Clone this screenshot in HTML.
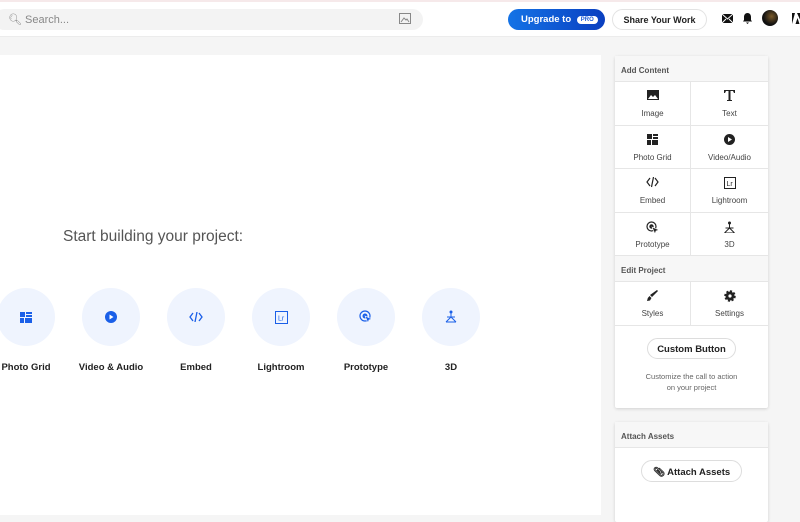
<!DOCTYPE html>
<html><head><style>
*{box-sizing:border-box;margin:0;padding:0}
body{width:800px;height:500px;overflow:hidden;background:#f5f5f5;font-family:"Liberation Sans",sans-serif;position:relative}
.abs{position:absolute}
.top{left:0;top:0;width:800px;height:37px;background:#fff;border-top:2px solid #f6e9ea;border-bottom:1px solid #ececec}
.search{left:-6px;top:9px;width:429px;height:21px;background:#f3f3f3;border-radius:11px;font-size:11px;color:#888;padding:4px 0 0 14px}
.up{left:508px;top:9px;width:97px;height:21px;border-radius:11px;background:linear-gradient(90deg,#1473e6,#0a3fc0);color:#fff;font-size:9.5px;font-weight:bold;padding:5px 0 0 13px}
.pro{display:inline-block;background:#fff;color:#1a5ad8;font-size:6px;border-radius:5px;padding:1px 4px;margin-left:3px;vertical-align:1px}
.share{left:612px;top:9px;width:95px;height:21px;border-radius:11px;border:1px solid #e3e3e3;background:#fff;font-size:9px;font-weight:bold;color:#222;text-align:center;padding-top:5px}
.canvas{left:0;top:55px;width:601px;height:460px;background:#fff}
.title{left:63px;top:228px;font-size:15.5px;color:#555}
.circ{width:58px;height:58px;border-radius:50%;background:#eff4fe;top:288px;display:flex;align-items:center;justify-content:center}
.lab{top:362px;width:100px;text-align:center;font-size:9.5px;font-weight:bold;color:#222}
.panel{background:#fff;box-shadow:0 1px 3px rgba(0,0,0,.15);border-radius:2px}
.hd{height:26px;background:#f7f7f7;font-size:8px;font-weight:bold;color:#555;padding:10px 0 0 6px;border-bottom:1px solid #e6e6e6}
.grid{display:grid;grid-template-columns:76px 77px}
.cell{height:43.5px;border-right:1px solid #e6e6e6;border-bottom:1px solid #e6e6e6;text-align:center;font-size:8px;color:#444;padding-top:8px}
.cell:nth-child(2n){border-right:none}
.cell svg{display:block;margin:0 auto 7px;height:12px}
.pill{border:1px solid #ddd;border-radius:12px;background:#fff;font-size:9.5px;font-weight:bold;color:#222;text-align:center}
</style></head><body>
<div class="abs top"></div>
<div class="abs search">🔍&#xFE0E; Search...</div>
<svg class="abs" style="left:399px;top:13px" width="12" height="11" viewBox="0 0 12 11"><rect x=".5" y=".5" width="11" height="10" fill="none" stroke="#888"/><path d="M2 9l3-4 2 2 1-1 2 3" fill="none" stroke="#888"/></svg>
<div class="abs up">Upgrade to <span class="pro">PRO</span></div>
<div class="abs share">Share Your Work</div>
<svg class="abs" style="left:722px;top:14px" width="11" height="9"><rect width="11" height="9" fill="#111"/><path d="M0 0l5.5 5 5.5-5M0 9l4-4M11 9l-4-4" stroke="#fff" fill="none"/></svg>
<svg class="abs" style="left:743px;top:13px" width="9" height="11"><path d="M4.5 0c-2 0-3.5 1.5-3.5 4v3l-1 1.5h9l-1-1.5v-3c0-2.5-1.5-4-3.5-4zM3 9.5h3l-1.5 1.5z" fill="#111"/></svg>
<div class="abs" style="left:762px;top:10px;width:16px;height:16px;border-radius:50%;background:radial-gradient(circle at 60% 40%,#7a5a2a,#111 60%)"></div>
<svg class="abs" style="left:792px;top:13px" width="10" height="11"><path d="M0 11V0h3zM5 0h5v11zM5.5 5l2 6h-4z" fill="#111"/></svg>
<div class="abs canvas"></div>
<div class="abs title">Start building your project:</div>
<div class="abs circ" style="left:-3px"><svg width="12" height="11"><path d="M0 0h5v5H0zM6 0h6v2H6zM6 3h6v2H6zM0 6h4v5H0zM5 6h7v5H5z" fill="#1a5fe8"/></svg></div>
<div class="abs circ" style="left:82px"><svg width="12" height="12"><circle cx="6" cy="6" r="6" fill="#1a5fe8"/><path d="M4.5 3.5v5l4-2.5z" fill="#fff"/></svg></div>
<div class="abs circ" style="left:167px"><svg width="14" height="10"><path d="M4 1L1 5l3 4M10 1l3 4-3 4M8 0L6 10" stroke="#1a5fe8" stroke-width="1.3" fill="none"/></svg></div>
<div class="abs circ" style="left:252px"><svg width="13" height="13"><rect x=".5" y=".5" width="12" height="12" fill="none" stroke="#1a5fe8"/><text x="3" y="9.5" font-size="7" fill="#1a5fe8" font-family="Liberation Sans">Lr</text></svg></div>
<div class="abs circ" style="left:337px"><svg width="14" height="14"><circle cx="6" cy="6" r="5" fill="none" stroke="#1a5fe8" stroke-width="1.2"/><circle cx="6" cy="6" r="2.5" fill="#1a5fe8"/><path d="M6 6l7 3-3 1-1 3z" fill="#1a5fe8" stroke="#fff" stroke-width=".6"/></svg></div>
<div class="abs circ" style="left:422px"><svg width="14" height="14"><circle cx="7" cy="2" r="1.5" fill="#1a5fe8"/><path d="M7 3v4M2 12l5-5 5 5M2 12h10M3 7h8" stroke="#1a5fe8" fill="none"/></svg></div>
<div class="abs lab" style="left:-24px">Photo Grid</div>
<div class="abs lab" style="left:61px">Video &amp; Audio</div>
<div class="abs lab" style="left:146px">Embed</div>
<div class="abs lab" style="left:231px">Lightroom</div>
<div class="abs lab" style="left:316px">Prototype</div>
<div class="abs lab" style="left:401px">3D</div>

<div class="abs panel" style="left:615px;top:56px;width:153px;height:352px">
<div class="hd">Add Content</div>
<div class="grid">
<div class="cell"><svg width="12" height="10"><rect width="12" height="10" fill="#222"/><path d="M1 9l3-4 2 2 2-2 3 4z" fill="#fff"/></svg>Image</div>
<div class="cell"><svg width="11" height="11"><path d="M0 0h11v3h-1l-1-2H6.5v9H8v1H3v-1h1.5V1H2L1 3H0z" fill="#222"/></svg>Text</div>
<div class="cell"><svg width="11" height="11"><path d="M0 0h5v5H0zM6 0h5v2H6zM6 3h5v2H6zM0 6h4v5H0zM5 6h6v5H5z" fill="#222"/></svg>Photo Grid</div>
<div class="cell"><svg width="11" height="11"><circle cx="5.5" cy="5.5" r="5.5" fill="#222"/><path d="M4 3v5l4-2.5z" fill="#fff"/></svg>Video/Audio</div>
<div class="cell"><svg width="13" height="10"><path d="M4 1L1 5l3 4M9 1l3 4-3 4M7.5 0L5.5 10" stroke="#222" stroke-width="1.2" fill="none"/></svg>Embed</div>
<div class="cell"><svg width="12" height="12"><rect x=".5" y=".5" width="11" height="11" fill="none" stroke="#222"/><text x="2.5" y="9" font-size="7" fill="#222" font-family="Liberation Sans">Lr</text></svg>Lightroom</div>
<div class="cell"><svg width="13" height="13"><circle cx="5.5" cy="5.5" r="4.5" fill="none" stroke="#222" stroke-width="1.2"/><circle cx="5.5" cy="5.5" r="2.2" fill="#222"/><path d="M6 6l7 3-3 1-1 3z" fill="#222" stroke="#fff" stroke-width=".6"/></svg>Prototype</div>
<div class="cell"><svg width="13" height="13"><circle cx="6.5" cy="2" r="1.5" fill="#222"/><path d="M6.5 3v4M1.5 12l5-5 5 5M1.5 12h10M2.5 7h8" stroke="#222" fill="none"/></svg>3D</div>
</div>
<div class="hd" style="height:26px">Edit Project</div>
<div class="grid">
<div class="cell" style="height:44px"><svg width="11" height="11"><path d="M10 0l1 1-6 6-2-2zM2.5 6l2 2-1.5 2.5L0 11l.8-3z" fill="#222"/></svg>Styles</div>
<div class="cell" style="height:44px"><svg width="12" height="12"><circle cx="6" cy="6" r="4.5" fill="#222" stroke="#222" stroke-width="2.5" stroke-dasharray="2 1.5"/><circle cx="6" cy="6" r="1.6" fill="#fff"/></svg>Settings</div>
</div>
<div class="abs pill" style="left:32px;top:282px;width:89px;height:21px;padding-top:5px">Custom Button</div>
<div class="abs" style="left:0;top:315px;width:153px;text-align:center;font-size:7.5px;color:#666;line-height:11px">Customize the call to action<br>on your project</div>
</div>

<div class="abs panel" style="left:615px;top:422px;width:153px;height:100px">
<div class="hd">Attach Assets</div>
<div class="abs pill" style="left:26px;top:38px;width:101px;height:22px;padding-top:6px">&#x1F4CE;&#xFE0E; Attach Assets</div>
</div>
</body></html>
